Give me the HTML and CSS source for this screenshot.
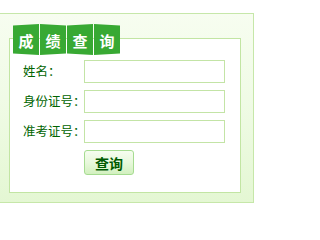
FILE: index.html
```html
<!DOCTYPE html>
<html>
<head>
<meta charset="utf-8">
<link rel="stylesheet" href="styles.css">
</head>
<body>
<div class="outer">
  <div class="panel">
    <div class="tab">
      <svg class="tab-bg" width="107" height="33" viewBox="0 0 107 33">
        <polygon points="0,2.5 26,1 26,32 0,30.5" fill="#38a933"/>
        <polygon points="27,1 53,2.5 53,30.5 27,32" fill="#38a933"/>
        <polygon points="54,2.5 80,1 80,32 54,30.5" fill="#38a933"/>
        <polygon points="81,1 107,2.5 107,30.5 81,32" fill="#38a933"/>
      </svg>
      <div class="tab-text"><span>成</span><span>绩</span><span>查</span><span>询</span></div>
    </div>
    <form class="form">
      <div class="row"><label class="lbl">姓名：</label><input class="inp" type="text"></div>
      <div class="row"><label class="lbl">身份证号：</label><input class="inp" type="text"></div>
      <div class="row"><label class="lbl">准考证号：</label><input class="inp" type="text"></div>
      <div class="row"><span class="lbl"></span><button class="btn" type="button">查询</button></div>
    </form>
  </div>
</div>
</body>
</html>
```

FILE: styles.css
```css
html, body {
  margin: 0;
  padding: 0;
  background: #ffffff;
}
body {
  font-family: "Noto Sans CJK SC", "Liberation Sans", sans-serif;
  width: 259px;
  height: 210px;
  overflow: hidden;
}
.outer {
  margin-top: 13px;
  width: 254px;
  height: 190px;
  border-top: 1px solid #c6e7a9;
  border-right: 1px solid #c6e7a9;
  border-bottom: 1px solid #c6e7a9;
  background: linear-gradient(180deg, #f7fdf0 0%, #f0fbe6 45%, #e4f7d3 100%);
  padding: 24px 12px 9px 9px;
  box-sizing: border-box;
}
.panel {
  position: relative;
  background: #ffffff;
  border: 1px solid #c2e5a3;
  height: 155px;
  box-sizing: border-box;
}
.tab {
  position: absolute;
  left: 3px;
  top: -16px;
  width: 107px;
  height: 33px;
}
.tab-bg {
  display: block;
}
.tab-text {
  position: absolute;
  left: 0;
  top: 0;
  height: 33px;
  display: flex;
  gap: 1px;
}
.tab-text span {
  width: 26px;
  height: 33px;
  display: flex;
  align-items: center;
  justify-content: center;
  color: #ffffff;
  font-weight: bold;
  font-size: 15px;
  line-height: 1;
  padding-top: 1px;
  box-sizing: border-box;
}
.form {
  margin: 0;
  padding: 21px 0 0 13px;
  display: flex;
  flex-direction: column;
  gap: 7px;
}
.row {
  display: flex;
  align-items: center;
  height: 23px;
}
.row:last-child {
  height: 25px;
}
.lbl {
  width: 61px;
  font-size: 12.5px;
  color: #006400;
  line-height: 1;
  white-space: nowrap;
}
.inp {
  width: 141px;
  height: 23px;
  box-sizing: border-box;
  border: 1px solid #c3e4a6;
  background: #ffffff;
  margin: 0;
  padding: 0;
  outline: none;
}
.btn {
  width: 50px;
  height: 25px;
  box-sizing: border-box;
  margin: 0;
  padding: 0;
  border: 1px solid #a6dc91;
  border-radius: 3px;
  background: linear-gradient(180deg, #f6fdf0 0%, #e8f8dc 50%, #d2f0bf 100%);
  color: #005a00;
  font-family: "Noto Sans CJK SC", sans-serif;
  font-weight: bold;
  font-size: 14px;
  line-height: 1;
}
```
